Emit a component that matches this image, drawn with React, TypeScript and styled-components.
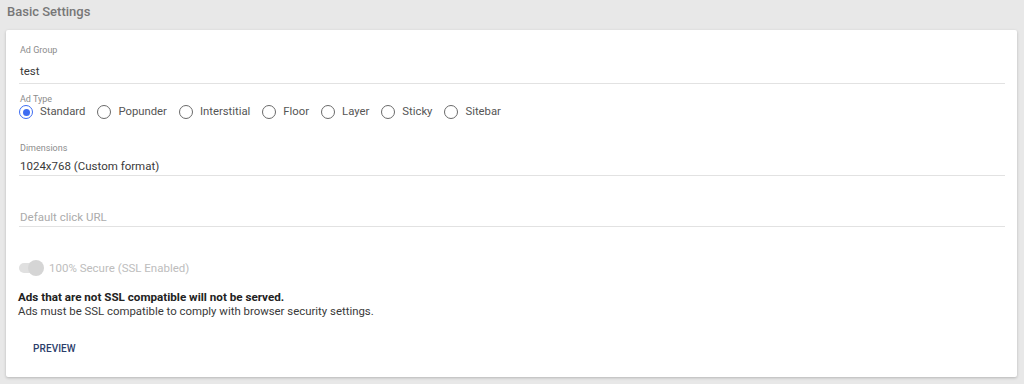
import React from "react";
import styled, { createGlobalStyle } from "styled-components";

const GlobalStyle = createGlobalStyle`
  html, body {
    margin: 0;
    padding: 0;
    background: #e8e8e8;
    font-family: Roboto, "Noto Sans", "Liberation Sans", sans-serif;
  }
`;

const Page = styled.div`
  padding: 0 7px 7px 6px;
`;

const Title = styled.h2`
  margin: 0;
  padding: 2px 0 0 1px;
  height: 30px;
  box-sizing: border-box;
  font-size: 13px;
  line-height: 20px;
  font-weight: 500;
  color: #777777;
`;

const Card = styled.section`
  background: #ffffff;
  box-shadow: 0 1px 3px rgba(0, 0, 0, 0.22);
  border-radius: 2px;
  height: 347px;
  box-sizing: border-box;
  padding: 15px 12px 0 13px;
  display: flex;
  flex-direction: column;
`;

const Field = styled.div<{ $mt?: number; $pb?: number }>`
  margin-top: ${(p) => p.$mt ?? 0}px;
  padding-bottom: ${(p) => p.$pb ?? 0}px;
  border-bottom: 1px solid #e2e2e2;
  display: flex;
  flex-direction: column;
`;

const SmallLabel = styled.label<{ $mt?: number }>`
  margin-top: ${(p) => p.$mt ?? 0}px;
  font-size: 9px;
  line-height: 11px;
  color: #8c8c8c;
  padding-left: 1px;
`;

const Value = styled.div<{ $mt?: number; $muted?: boolean }>`
  margin-top: ${(p) => p.$mt ?? 0}px;
  font-size: 11.5px;
  line-height: 18px;
  padding-left: 1px;
  color: ${(p) => (p.$muted ? "#ababab" : "#3a3a3a")};
`;

const RadioGroup = styled.div`
  display: flex;
  align-items: center;
  height: 14px;
  gap: 12px;
`;

const RadioItem = styled.label`
  display: flex;
  align-items: center;
  gap: 7px;
  font-size: 11.3px;
  line-height: 14px;
  color: #555555;
`;

const RadioCircle = styled.span<{ $checked?: boolean }>`
  width: 14px;
  height: 14px;
  box-sizing: border-box;
  border-radius: 50%;
  border: 1.5px solid ${(p) => (p.$checked ? "#3d6cf2" : "#6a6a6a")};
  display: flex;
  align-items: center;
  justify-content: center;
  &::after {
    content: "";
    width: 7px;
    height: 7px;
    border-radius: 50%;
    background: ${(p) => (p.$checked ? "#3d6cf2" : "transparent")};
  }
`;

const ToggleRow = styled.div`
  margin-top: 31px;
  height: 20px;
  display: flex;
  align-items: center;
  gap: 10px;
  font-size: 11.5px;
  color: #bdbdbd;
`;

const Track = styled.span`
  position: relative;
  width: 20px;
  height: 10px;
  border-radius: 5px;
  background: #e0e0e0;
  display: inline-block;
`;

const Thumb = styled.span`
  position: absolute;
  right: -5px;
  top: -3px;
  width: 16px;
  height: 16px;
  border-radius: 50%;
  background: #d5d5d5;
`;

const Notice = styled.div`
  margin-top: 12px;
  font-size: 11.4px;
  line-height: 14px;
  color: #3a3a3a;
  margin-left: -1px;
`;

const NoticeStrong = styled.div`
  font-weight: 700;
  font-size: 11.65px;
  color: #222222;
`;

const PreviewButton = styled.button`
  align-self: flex-start;
  margin: 16px 0 0 6px;
  height: 30px;
  padding: 0 8px;
  border: none;
  background: transparent;
  font-family: inherit;
  font-size: 10px;
  font-weight: 500;
  line-height: 30px;
  letter-spacing: 0.1px;
  color: #2c3e6b;
  text-transform: uppercase;
  cursor: pointer;
`;

const adTypes = ["Standard", "Popunder", "Interstitial", "Floor", "Layer", "Sticky", "Sitebar"];

export default function App() {
  return (
    <>
      <GlobalStyle />
      <Page>
        <Title>Basic Settings</Title>
        <Card>
          <Field $pb={3}>
            <SmallLabel>Ad Group</SmallLabel>
            <Value $mt={6}>test</Value>
          </Field>
          <SmallLabel $mt={10}>Ad Type</SmallLabel>
          <RadioGroup>
            {adTypes.map((t, i) => (
              <RadioItem key={t}>
                <RadioCircle $checked={i === 0} />
                {t}
              </RadioItem>
            ))}
          </RadioGroup>
          <Field $mt={24}>
            <SmallLabel>Dimensions</SmallLabel>
            <Value $mt={3}>1024x768 (Custom format)</Value>
          </Field>
          <Field $mt={32}>
            <Value $muted>Default click URL</Value>
          </Field>
          <ToggleRow>
            <Track>
              <Thumb />
            </Track>
            100% Secure (SSL Enabled)
          </ToggleRow>
          <Notice>
            <NoticeStrong>Ads that are not SSL compatible will not be served.</NoticeStrong>
            Ads must be SSL compatible to comply with browser security settings.
          </Notice>
          <PreviewButton>Preview</PreviewButton>
        </Card>
      </Page>
    </>
  );
}
